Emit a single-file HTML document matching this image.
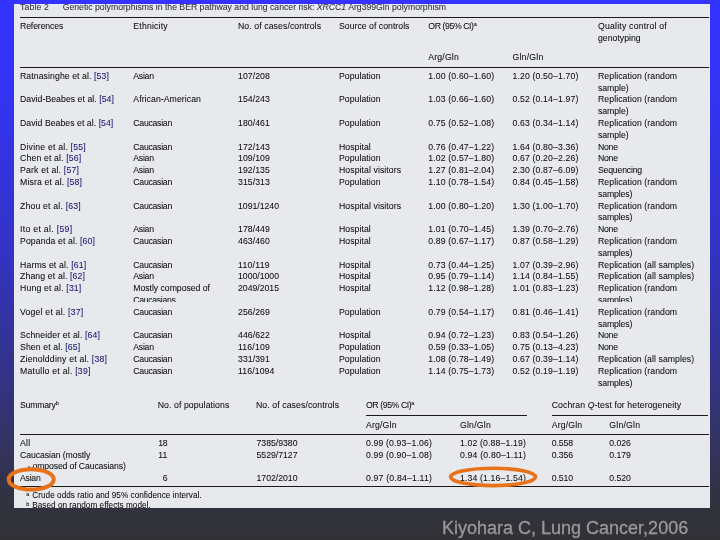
<!DOCTYPE html>
<html><head><meta charset="utf-8"><title>Kiyohara C, Lung Cancer, 2006</title>
<style>
html,body{margin:0;padding:0}
body{width:720px;height:540px;overflow:hidden;position:relative;
 background:linear-gradient(to bottom,#3333ff 0%,#3333f0 19.4%,#3333c3 47.2%,#333387 69.4%,#33335a 84.3%,#323248 90%,#32323d 94.5%,#313136 100%);
 font-family:"Liberation Sans",sans-serif}
#tbl{position:absolute;left:14px;top:4px;width:696px;height:503.5px;background:#e7e9ec;overflow:hidden;color:#0a0a0a;font-size:8.7px;line-height:12px;-webkit-text-stroke:0.05px #0a0a0a}
#tbl>*{filter:blur(0.35px)}
#tbl span{position:absolute;white-space:nowrap;height:12px}
#tbl span.ttl{opacity:.85}
#tbl span.clip{height:8.4px;overflow:hidden}
#tbl b{font-weight:normal;color:#11116e;-webkit-text-stroke-color:#11116e}
#tbl sup{font-size:5.5px;line-height:0;vertical-align:3px}
#tbl .r{position:absolute;background:#1a1a1a}
.el{position:absolute;border:3.6px solid #e8721a;border-radius:50%;box-sizing:border-box}
#cap{position:absolute;left:442px;top:517px;font-size:18px;line-height:22px;color:#999;white-space:nowrap;-webkit-text-stroke:0.3px #999;filter:blur(0.3px)}
</style></head><body>
<div id="tbl">
<span class="ttl" style="left:6.0px;top:-3.1px;letter-spacing:0.134px">Table 2</span>
<span class="ttl" style="left:48.7px;top:-3.1px;letter-spacing:-0.006px">Genetic polymorphisms in the BER pathway and lung cancer risk: <i>XRCC1</i> Arg399Gln polymorphism</span>
<span style="left:6.0px;top:16.0px;letter-spacing:-0.122px">References</span>
<span style="left:119.3px;top:16.0px;letter-spacing:0.196px">Ethnicity</span>
<span style="left:224.0px;top:16.0px;letter-spacing:0.093px">No. of cases/controls</span>
<span style="left:325.0px;top:16.0px;letter-spacing:0.025px">Source of controls</span>
<span style="left:414.3px;top:16.0px;letter-spacing:-0.400px">OR (95% CI)<sup>a</sup></span>
<span style="left:584.0px;top:16.0px;letter-spacing:0.206px">Quality control of</span>
<span style="left:584.0px;top:27.8px;letter-spacing:0.019px">genotyping</span>
<span style="left:414.3px;top:47.0px;letter-spacing:0.170px">Arg/Gln</span>
<span style="left:498.5px;top:47.0px;letter-spacing:0.214px">Gln/Gln</span>
<span style="left:6.0px;top:65.7px;letter-spacing:0.084px">Ratnasinghe et al. <b>[53]</b></span>
<span style="left:119.3px;top:65.7px;letter-spacing:-0.256px">Asian</span>
<span style="left:224.0px;top:65.7px;letter-spacing:0.072px">107/208</span>
<span style="left:325.0px;top:65.7px;letter-spacing:0.054px">Population</span>
<span style="left:414.3px;top:65.7px;letter-spacing:0.140px">1.00 (0.60–1.60)</span>
<span style="left:498.5px;top:65.7px;letter-spacing:0.140px">1.20 (0.50–1.70)</span>
<span style="left:584.0px;top:65.7px;letter-spacing:0.075px">Replication (random</span>
<span style="left:584.0px;top:77.5px;letter-spacing:-0.035px">sample)</span>
<span style="left:6.0px;top:89.3px;letter-spacing:0.049px">David-Beabes et al. <b>[54]</b></span>
<span style="left:119.3px;top:89.3px;letter-spacing:0.062px">African-American</span>
<span style="left:224.0px;top:89.3px;letter-spacing:0.072px">154/243</span>
<span style="left:325.0px;top:89.3px;letter-spacing:0.054px">Population</span>
<span style="left:414.3px;top:89.3px;letter-spacing:0.140px">1.03 (0.66–1.60)</span>
<span style="left:498.5px;top:89.3px;letter-spacing:0.140px">0.52 (0.14–1.97)</span>
<span style="left:584.0px;top:89.3px;letter-spacing:0.075px">Replication (random</span>
<span style="left:584.0px;top:101.1px;letter-spacing:-0.035px">sample)</span>
<span style="left:6.0px;top:112.9px;letter-spacing:0.044px">David Beabes et al. <b>[54]</b></span>
<span style="left:119.3px;top:112.9px;letter-spacing:-0.261px">Caucasian</span>
<span style="left:224.0px;top:112.9px;letter-spacing:0.072px">180/461</span>
<span style="left:325.0px;top:112.9px;letter-spacing:0.054px">Population</span>
<span style="left:414.3px;top:112.9px;letter-spacing:0.140px">0.75 (0.52–1.08)</span>
<span style="left:498.5px;top:112.9px;letter-spacing:0.140px">0.63 (0.34–1.14)</span>
<span style="left:584.0px;top:112.9px;letter-spacing:0.075px">Replication (random</span>
<span style="left:584.0px;top:124.7px;letter-spacing:-0.035px">sample)</span>
<span style="left:6.0px;top:136.5px;letter-spacing:0.200px">Divine et al. <b>[55]</b></span>
<span style="left:119.3px;top:136.5px;letter-spacing:-0.261px">Caucasian</span>
<span style="left:224.0px;top:136.5px;letter-spacing:0.072px">172/143</span>
<span style="left:325.0px;top:136.5px;letter-spacing:0.050px">Hospital</span>
<span style="left:414.3px;top:136.5px;letter-spacing:0.140px">0.76 (0.47–1.22)</span>
<span style="left:498.5px;top:136.5px;letter-spacing:0.140px">1.64 (0.80–3.36)</span>
<span style="left:584.0px;top:136.5px;letter-spacing:-0.267px">None</span>
<span style="left:6.0px;top:148.3px;letter-spacing:0.149px">Chen et al. <b>[56]</b></span>
<span style="left:119.3px;top:148.3px;letter-spacing:-0.256px">Asian</span>
<span style="left:224.0px;top:148.3px;letter-spacing:0.072px">109/109</span>
<span style="left:325.0px;top:148.3px;letter-spacing:0.054px">Population</span>
<span style="left:414.3px;top:148.3px;letter-spacing:0.140px">1.02 (0.57–1.80)</span>
<span style="left:498.5px;top:148.3px;letter-spacing:0.140px">0.67 (0.20–2.26)</span>
<span style="left:584.0px;top:148.3px;letter-spacing:-0.267px">None</span>
<span style="left:6.0px;top:160.1px;letter-spacing:0.190px">Park et al. <b>[57]</b></span>
<span style="left:119.3px;top:160.1px;letter-spacing:-0.256px">Asian</span>
<span style="left:224.0px;top:160.1px;letter-spacing:0.072px">192/135</span>
<span style="left:325.0px;top:160.1px;letter-spacing:0.079px">Hospital visitors</span>
<span style="left:414.3px;top:160.1px;letter-spacing:0.140px">1.27 (0.81–2.04)</span>
<span style="left:498.5px;top:160.1px;letter-spacing:0.140px">2.30 (0.87–6.09)</span>
<span style="left:584.0px;top:160.1px;letter-spacing:-0.197px">Sequencing</span>
<span style="left:6.0px;top:171.9px;letter-spacing:0.152px">Misra et al. <b>[58]</b></span>
<span style="left:119.3px;top:171.9px;letter-spacing:-0.261px">Caucasian</span>
<span style="left:224.0px;top:171.9px;letter-spacing:0.072px">315/313</span>
<span style="left:325.0px;top:171.9px;letter-spacing:0.054px">Population</span>
<span style="left:414.3px;top:171.9px;letter-spacing:0.140px">1.10 (0.78–1.54)</span>
<span style="left:498.5px;top:171.9px;letter-spacing:0.140px">0.84 (0.45–1.58)</span>
<span style="left:584.0px;top:171.9px;letter-spacing:0.075px">Replication (random</span>
<span style="left:584.0px;top:183.7px;letter-spacing:-0.133px">samples)</span>
<span style="left:6.0px;top:195.5px;letter-spacing:0.179px">Zhou et al. <b>[63]</b></span>
<span style="left:119.3px;top:195.5px;letter-spacing:-0.261px">Caucasian</span>
<span style="left:224.0px;top:195.5px;letter-spacing:-0.005px">1091/1240</span>
<span style="left:325.0px;top:195.5px;letter-spacing:0.079px">Hospital visitors</span>
<span style="left:414.3px;top:195.5px;letter-spacing:0.140px">1.00 (0.80–1.20)</span>
<span style="left:498.5px;top:195.5px;letter-spacing:0.140px">1.30 (1.00–1.70)</span>
<span style="left:584.0px;top:195.5px;letter-spacing:0.075px">Replication (random</span>
<span style="left:584.0px;top:207.3px;letter-spacing:-0.133px">samples)</span>
<span style="left:6.0px;top:219.1px;letter-spacing:0.305px">Ito et al. <b>[59]</b></span>
<span style="left:119.3px;top:219.1px;letter-spacing:-0.256px">Asian</span>
<span style="left:224.0px;top:219.1px;letter-spacing:0.072px">178/449</span>
<span style="left:325.0px;top:219.1px;letter-spacing:0.050px">Hospital</span>
<span style="left:414.3px;top:219.1px;letter-spacing:0.140px">1.01 (0.70–1.45)</span>
<span style="left:498.5px;top:219.1px;letter-spacing:0.140px">1.39 (0.70–2.76)</span>
<span style="left:584.0px;top:219.1px;letter-spacing:-0.267px">None</span>
<span style="left:6.0px;top:230.9px;letter-spacing:0.106px">Popanda et al. <b>[60]</b></span>
<span style="left:119.3px;top:230.9px;letter-spacing:-0.261px">Caucasian</span>
<span style="left:224.0px;top:230.9px;letter-spacing:0.072px">463/460</span>
<span style="left:325.0px;top:230.9px;letter-spacing:0.050px">Hospital</span>
<span style="left:414.3px;top:230.9px;letter-spacing:0.140px">0.89 (0.67–1.17)</span>
<span style="left:498.5px;top:230.9px;letter-spacing:0.140px">0.87 (0.58–1.29)</span>
<span style="left:584.0px;top:230.9px;letter-spacing:0.075px">Replication (random</span>
<span style="left:584.0px;top:242.7px;letter-spacing:-0.133px">samples)</span>
<span style="left:6.0px;top:254.5px;letter-spacing:0.148px">Harms et al. <b>[61]</b></span>
<span style="left:119.3px;top:254.5px;letter-spacing:-0.261px">Caucasian</span>
<span style="left:224.0px;top:254.5px;letter-spacing:0.255px">110/119</span>
<span style="left:325.0px;top:254.5px;letter-spacing:0.050px">Hospital</span>
<span style="left:414.3px;top:254.5px;letter-spacing:0.140px">0.73 (0.44–1.25)</span>
<span style="left:498.5px;top:254.5px;letter-spacing:0.140px">1.07 (0.39–2.96)</span>
<span style="left:584.0px;top:254.5px;letter-spacing:0.064px">Replication (all samples)</span>
<span style="left:6.0px;top:266.3px;letter-spacing:0.135px">Zhang et al. <b>[62]</b></span>
<span style="left:119.3px;top:266.3px;letter-spacing:-0.256px">Asian</span>
<span style="left:224.0px;top:266.3px;letter-spacing:-0.005px">1000/1000</span>
<span style="left:325.0px;top:266.3px;letter-spacing:0.050px">Hospital</span>
<span style="left:414.3px;top:266.3px;letter-spacing:0.140px">0.95 (0.79–1.14)</span>
<span style="left:498.5px;top:266.3px;letter-spacing:0.140px">1.14 (0.84–1.55)</span>
<span style="left:584.0px;top:266.3px;letter-spacing:0.064px">Replication (all samples)</span>
<span style="left:6.0px;top:278.1px;letter-spacing:0.156px">Hung et al. <b>[31]</b></span>
<span style="left:119.3px;top:278.1px;letter-spacing:-0.036px">Mostly composed of</span>
<span class="clip" style="left:119.3px;top:289.9px;letter-spacing:-0.317px">Caucasians</span>
<span style="left:224.0px;top:278.1px;letter-spacing:-0.005px">2049/2015</span>
<span style="left:325.0px;top:278.1px;letter-spacing:0.050px">Hospital</span>
<span style="left:414.3px;top:278.1px;letter-spacing:0.140px">1.12 (0.98–1.28)</span>
<span style="left:498.5px;top:278.1px;letter-spacing:0.140px">1.01 (0.83–1.23)</span>
<span style="left:584.0px;top:278.1px;letter-spacing:0.075px">Replication (random</span>
<span class="clip" style="left:584.0px;top:289.9px;letter-spacing:-0.133px">samples)</span>
<span style="left:6.0px;top:301.7px;letter-spacing:0.201px">Vogel et al. <b>[37]</b></span>
<span style="left:119.3px;top:301.7px;letter-spacing:-0.261px">Caucasian</span>
<span style="left:224.0px;top:301.7px;letter-spacing:0.072px">256/269</span>
<span style="left:325.0px;top:301.7px;letter-spacing:0.054px">Population</span>
<span style="left:414.3px;top:301.7px;letter-spacing:0.140px">0.79 (0.54–1.17)</span>
<span style="left:498.5px;top:301.7px;letter-spacing:0.140px">0.81 (0.46–1.41)</span>
<span style="left:584.0px;top:301.7px;letter-spacing:0.075px">Replication (random</span>
<span style="left:584.0px;top:313.5px;letter-spacing:-0.133px">samples)</span>
<span style="left:6.0px;top:325.3px;letter-spacing:0.132px">Schneider et al. <b>[64]</b></span>
<span style="left:119.3px;top:325.3px;letter-spacing:-0.261px">Caucasian</span>
<span style="left:224.0px;top:325.3px;letter-spacing:0.072px">446/622</span>
<span style="left:325.0px;top:325.3px;letter-spacing:0.050px">Hospital</span>
<span style="left:414.3px;top:325.3px;letter-spacing:0.140px">0.94 (0.72–1.23)</span>
<span style="left:498.5px;top:325.3px;letter-spacing:0.140px">0.83 (0.54–1.26)</span>
<span style="left:584.0px;top:325.3px;letter-spacing:-0.267px">None</span>
<span style="left:6.0px;top:337.1px;letter-spacing:0.115px">Shen et al. <b>[65]</b></span>
<span style="left:119.3px;top:337.1px;letter-spacing:-0.256px">Asian</span>
<span style="left:224.0px;top:337.1px;letter-spacing:0.164px">116/109</span>
<span style="left:325.0px;top:337.1px;letter-spacing:0.054px">Population</span>
<span style="left:414.3px;top:337.1px;letter-spacing:0.140px">0.59 (0.33–1.05)</span>
<span style="left:498.5px;top:337.1px;letter-spacing:0.140px">0.75 (0.13–4.23)</span>
<span style="left:584.0px;top:337.1px;letter-spacing:-0.267px">None</span>
<span style="left:6.0px;top:348.9px;letter-spacing:0.195px">Zienolddiny et al. <b>[38]</b></span>
<span style="left:119.3px;top:348.9px;letter-spacing:-0.261px">Caucasian</span>
<span style="left:224.0px;top:348.9px;letter-spacing:0.072px">331/391</span>
<span style="left:325.0px;top:348.9px;letter-spacing:0.054px">Population</span>
<span style="left:414.3px;top:348.9px;letter-spacing:0.140px">1.08 (0.78–1.49)</span>
<span style="left:498.5px;top:348.9px;letter-spacing:0.140px">0.67 (0.39–1.14)</span>
<span style="left:584.0px;top:348.9px;letter-spacing:0.064px">Replication (all samples)</span>
<span style="left:6.0px;top:360.7px;letter-spacing:0.234px">Matullo et al. <b>[39]</b></span>
<span style="left:119.3px;top:360.7px;letter-spacing:-0.261px">Caucasian</span>
<span style="left:224.0px;top:360.7px;letter-spacing:0.110px">116/1094</span>
<span style="left:325.0px;top:360.7px;letter-spacing:0.054px">Population</span>
<span style="left:414.3px;top:360.7px;letter-spacing:0.140px">1.14 (0.75–1.73)</span>
<span style="left:498.5px;top:360.7px;letter-spacing:0.140px">0.52 (0.19–1.19)</span>
<span style="left:584.0px;top:360.7px;letter-spacing:0.075px">Replication (random</span>
<span style="left:584.0px;top:372.5px;letter-spacing:-0.133px">samples)</span>
<span style="left:6.0px;top:395.0px;letter-spacing:-0.218px">Summary<sup>b</sup></span>
<span style="left:143.7px;top:395.0px;letter-spacing:0.091px">No. of populations</span>
<span style="left:242.0px;top:395.0px;letter-spacing:0.093px">No. of cases/controls</span>
<span style="left:352.0px;top:395.0px;letter-spacing:-0.400px">OR (95% CI)<sup>a</sup></span>
<span style="left:537.7px;top:395.0px;letter-spacing:0.094px">Cochran <i>Q</i>-test for heterogeneity</span>
<span style="left:352.0px;top:414.5px;letter-spacing:0.170px">Arg/Gln</span>
<span style="left:446.0px;top:414.5px;letter-spacing:0.214px">Gln/Gln</span>
<span style="left:537.7px;top:414.5px;letter-spacing:0.170px">Arg/Gln</span>
<span style="left:595.3px;top:414.5px;letter-spacing:0.214px">Gln/Gln</span>
<span style="left:6.0px;top:432.7px;letter-spacing:0.203px">All</span>
<span style="left:144.3px;top:432.7px;letter-spacing:-0.277px">18</span>
<span style="left:242.5px;top:432.7px;letter-spacing:-0.005px">7385/9380</span>
<span style="left:352.0px;top:432.7px;letter-spacing:0.140px">0.99 (0.93–1.06)</span>
<span style="left:446.0px;top:432.7px;letter-spacing:0.140px">1.02 (0.88–1.19)</span>
<span style="left:537.7px;top:432.7px;letter-spacing:-0.064px">0.558</span>
<span style="left:595.3px;top:432.7px;letter-spacing:-0.064px">0.026</span>
<span style="left:6.0px;top:445.0px;letter-spacing:-0.072px">Caucasian (mostly</span>
<span style="left:144.3px;top:445.0px;letter-spacing:0.043px">11</span>
<span style="left:242.5px;top:445.0px;letter-spacing:-0.005px">5529/7127</span>
<span style="left:352.0px;top:445.0px;letter-spacing:0.140px">0.99 (0.90–1.08)</span>
<span style="left:446.0px;top:445.0px;letter-spacing:0.180px">0.94 (0.80–1.11)</span>
<span style="left:537.7px;top:445.0px;letter-spacing:-0.064px">0.356</span>
<span style="left:595.3px;top:445.0px;letter-spacing:-0.064px">0.179</span>
<span style="left:6.0px;top:467.8px;letter-spacing:-0.256px">Asian</span>
<span style="left:148.7px;top:467.8px;letter-spacing:-0.285px">6</span>
<span style="left:242.5px;top:467.8px;letter-spacing:-0.005px">1702/2010</span>
<span style="left:352.0px;top:467.8px;letter-spacing:0.180px">0.97 (0.84–1.11)</span>
<span style="left:446.0px;top:467.8px;letter-spacing:0.140px">1.34 (1.16–1.54)</span>
<span style="left:537.7px;top:467.8px;letter-spacing:-0.064px">0.510</span>
<span style="left:595.3px;top:467.8px;letter-spacing:-0.064px">0.520</span>
<span style="left:14.3px;top:456.4px;letter-spacing:-0.133px">composed of Caucasians)</span>
<span style="left:12.3px;top:485.5px;letter-spacing:-0.192px"><sup>a</sup></span>
<span style="left:18.3px;top:485.8px;letter-spacing:0.032px;font-size:8.2px">Crude odds ratio and 95% confidence interval.</span>
<span style="left:12.3px;top:495.7px;letter-spacing:-0.192px"><sup>b</sup></span>
<span style="left:18.3px;top:496.0px;letter-spacing:0.022px;font-size:8.2px">Based on random effects model.</span>
<div style="position:absolute;left:14px;top:457px;width:5.2px;height:5px;background:#e7e9ec"></div>
<div class="r" style="left:6.0px;width:689.0px;top:12.75px;height:1.5px"></div>
<div class="r" style="left:6.0px;width:689.0px;top:62.65px;height:1.3px"></div>
<div class="r" style="left:352.0px;width:160.7px;top:410.50px;height:1px"></div>
<div class="r" style="left:537.7px;width:156.8px;top:410.50px;height:1px"></div>
<div class="r" style="left:6.0px;width:689.0px;top:430.10px;height:1.0px"></div>
<div class="r" style="left:6.0px;width:689.0px;top:481.55px;height:1.3px"></div>
</div>
<svg id="ov" width="720" height="540" viewBox="0 0 720 540" style="position:absolute;left:0;top:0">
<ellipse cx="31.2" cy="479.4" rx="22.5" ry="10.2" fill="none" stroke="#e8721a" stroke-width="4"/>
<ellipse cx="493.05" cy="476.9" rx="42.4" ry="8.65" fill="none" stroke="#e8721a" stroke-width="3.7"/>
</svg>
<div id="cap">Kiyohara C, Lung Cancer,2006</div>
</body></html>
